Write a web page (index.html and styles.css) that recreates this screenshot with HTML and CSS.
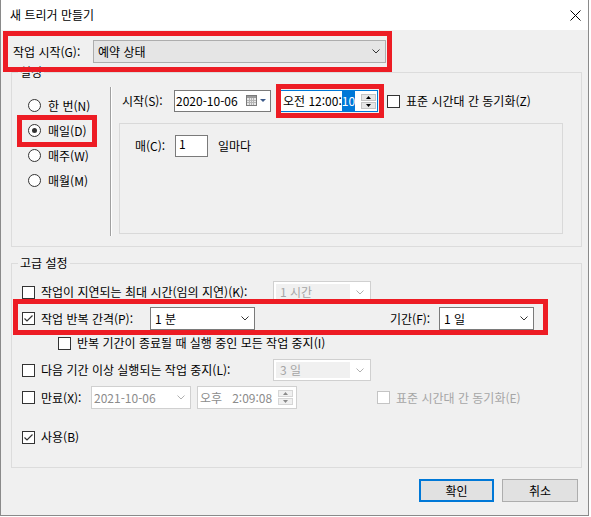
FILE: index.html
```html
<!DOCTYPE html>
<html lang="ko">
<head>
    <meta charset="UTF-8">
    <meta name="viewport" content="width=device-width, initial-scale=1.0">
    <title>새 트리거 만들기</title>
    <link rel="stylesheet" href="styles.css">
</head>
<body>
    <div class="window">
        <!-- Title bar -->
        <div class="titlebar">
            <span class="title">새 트리거 만들기</span>
            <svg class="close" width="11" height="11" viewBox="0 0 11 11"><path d="M0.5 0.5 L10.5 10.5 M10.5 0.5 L0.5 10.5" stroke="#000" stroke-width="1" fill="none"/></svg>
        </div>

        <div class="content">
            <!-- Begin the task -->
            <div class="start-row">
                <span class="start-label">작업 시작(G):</span>
                <div class="select select-start">
                    <span>예약 상태</span>
                    <svg class="chev" width="8" height="5" viewBox="0 0 8 5"><path d="M0.5 0.5 L4 4 L7.5 0.5" fill="none" stroke="#333"/></svg>
                </div>
            </div>

            <!-- Settings -->
            <fieldset class="group group-settings">
                <legend>설정</legend>
                <div class="settings">
                    <div class="radios">
                        <div class="radio-row"><span class="radio"></span>한 번(N)</div>
                        <div class="radio-row"><span class="radio on"></span>매일(D)</div>
                        <div class="radio-row"><span class="radio"></span>매주(W)</div>
                        <div class="radio-row"><span class="radio"></span>매월(M)</div>
                    </div>
                    <div class="sep"></div>
                    <div class="schedule">
                        <div class="when-row">
                            <span class="when-label">시작(S):</span>
                            <div class="date-box">
                                <span>2020-10-06</span>
                                <svg width="21" height="12" viewBox="0 0 21 12">
                                    <rect x="0.5" y="0.5" width="10" height="10" fill="#e8e8e8" stroke="#7a7a7a"/>
                                    <rect x="1" y="1" width="9" height="2" fill="#9a9a9a"/>
                                    <path d="M3.5 3 V10 M5.5 3 V10 M7.5 3 V10 M1 5.5 H10 M1 7.5 H10" stroke="#b4b4b4" stroke-width="1"/>
                                    <path d="M14 4 L20 4 L17 7 Z" fill="#3c5a8a"/>
                                </svg>
                            </div>
                            <div class="time-box focused">
                                <span>오전 12:00:<span class="sel">10</span></span>
                                <div class="spin">
                                    <span class="spin-btn"><svg width="5" height="3" viewBox="0 0 5 3"><path d="M2.5 0 L5 3 L0 3 Z" fill="#000"/></svg></span>
                                    <span class="spin-btn"><svg width="5" height="3" viewBox="0 0 5 3"><path d="M0 0 L5 0 L2.5 3 Z" fill="#000"/></svg></span>
                                </div>
                            </div>
                            <span class="check sync-check"></span>
                            <span class="gap-label">표준 시간대 간 동기화(Z)</span>
                        </div>
                        <div class="daily">
                            <div class="daily-row">
                                <span class="every-label">매(C):</span>
                                <span class="num-box">1</span>
                                <span class="every-unit">일마다</span>
                            </div>
                        </div>
                    </div>
                </div>
            </fieldset>

            <!-- Advanced settings -->
            <fieldset class="group group-adv">
                <legend>고급 설정</legend>
                <div class="opt-row row-delay">
                    <span class="check"></span>
                    <span class="opt-label wide">작업이 지연되는 최대 시간(임의 지연)(K):</span>
                    <div class="select select-off small">
                        <span class="off-text">1 시간</span>
                        <svg width="8" height="5" viewBox="0 0 8 5"><path d="M0.5 0.5 L4 4 L7.5 0.5" fill="none" stroke="#b0b0b0"/></svg>
                    </div>
                </div>
                <div class="opt-row row-repeat">
                    <span class="check"><svg width="11" height="11" viewBox="0 0 11 11"><path d="M1.5 5.5 L4 8 L9.5 2.5" fill="none" stroke="#333" stroke-width="1.2"/></svg></span>
                    <span class="opt-label repeat-label">작업 반복 간격(P):</span>
                    <div class="select select-on repeat-select">
                        <span>1 분</span>
                        <svg width="8" height="5" viewBox="0 0 8 5"><path d="M0.5 0.5 L4 4 L7.5 0.5" fill="none" stroke="#333"/></svg>
                    </div>
                    <span class="opt-label period-label">기간(F):</span>
                    <div class="select select-on period-select">
                        <span>1 일</span>
                        <svg width="8" height="5" viewBox="0 0 8 5"><path d="M0.5 0.5 L4 4 L7.5 0.5" fill="none" stroke="#333"/></svg>
                    </div>
                </div>
                <div class="opt-row row-stopall">
                    <span class="check"></span>
                    <span class="gap-label">반복 기간이 종료될 때 실행 중인 모든 작업 중지(I)</span>
                </div>
                <div class="opt-row row-stoplong">
                    <span class="check"></span>
                    <span class="opt-label wide">다음 기간 이상 실행되는 작업 중지(L):</span>
                    <div class="select select-off small">
                        <span class="off-text">3 일</span>
                        <svg width="8" height="5" viewBox="0 0 8 5"><path d="M0.5 0.5 L4 4 L7.5 0.5" fill="none" stroke="#b0b0b0"/></svg>
                    </div>
                </div>
                <div class="opt-row row-expire">
                    <span class="check"></span>
                    <span class="opt-label expire-label">만료(X):</span>
                    <div class="select select-off-plain expire-date">
                        <span>2021-10-06</span>
                        <svg width="8" height="5" viewBox="0 0 8 5"><path d="M0.5 0.5 L4 4 L7.5 0.5" fill="none" stroke="#b0b0b0"/></svg>
                    </div>
                    <div class="time-box off">
                        <span>오후&nbsp;&nbsp;&nbsp;2:09:08</span>
                        <div class="spin">
                            <span class="spin-btn"><svg width="5" height="3" viewBox="0 0 5 3"><path d="M2.5 0 L5 3 L0 3 Z" fill="#8a8a8a"/></svg></span>
                            <span class="spin-btn"><svg width="5" height="3" viewBox="0 0 5 3"><path d="M0 0 L5 0 L2.5 3 Z" fill="#8a8a8a"/></svg></span>
                        </div>
                    </div>
                    <span class="check disabled expire-sync"></span>
                    <span class="gap-label off-text">표준 시간대 간 동기화(E)</span>
                </div>
                <div class="opt-row row-enabled">
                    <span class="check"><svg width="11" height="11" viewBox="0 0 11 11"><path d="M1.5 5.5 L4 8 L9.5 2.5" fill="none" stroke="#333" stroke-width="1.2"/></svg></span>
                    <span class="gap-label">사용(B)</span>
                </div>
            </fieldset>

            <!-- Buttons -->
            <div class="buttons">
                <button class="btn btn-default">확인</button>
                <button class="btn">취소</button>
            </div>
        </div>

        <!-- Red annotation boxes -->
        <div class="mark mark-start"></div>
        <div class="mark mark-time"></div>
        <div class="mark mark-daily"></div>
        <div class="mark mark-repeat"></div>
    </div>
</body>
</html>
```

FILE: styles.css
```css
* {
    box-sizing: border-box;
}
body {
    margin: 0;
    background-color: #ffffff;
    font-family: "Noto Sans CJK KR", sans-serif;
    font-size: 12px;
    line-height: 16px;
    color: #000000;
}
.window {
    position: relative;
    width: 589px;
    height: 516px;
    border: 1px solid #8a8a8a;
    border-top: none;
    background-color: #f0f0f0;
}
.titlebar {
    height: 30px;
    background-color: #ffffff;
    display: flex;
    align-items: center;
    justify-content: space-between;
    padding: 0 7px 0 9px;
}
.content {
    padding: 10px 6px 0 10px;
}

/* Begin the task row */
.start-row {
    display: flex;
    align-items: center;
    height: 23px;
    padding-left: 2px;
}
.start-label {
    width: 80px;
}
.select {
    display: flex;
    align-items: center;
    justify-content: space-between;
    height: 22px;
    background-color: #ffffff;
    border: 1px solid #7a7a7a;
    padding: 0 5px 0 4px;
}
.select-start {
    width: 293px;
    height: 23px;
    background-color: #e5e5e5;
    border-color: #adadad;
}

/* Group boxes */
.group {
    margin: 0;
    padding: 0;
    min-width: 0;
    border: 1px solid #dcdcdc;
}
.group legend {
    margin-left: 6px;
    padding: 0 2px;
    line-height: 14px;
}
.group-settings {
    margin-top: 2px;
}
.group-adv {
    margin-top: 9px;
    padding-bottom: 22px;
}

/* Settings */
.settings {
    display: flex;
    height: 167px;
}
.radios {
    width: 98px;
    padding: 14px 0 0 16px;
}
.radio-row {
    display: flex;
    align-items: center;
    height: 25px;
}
.radio {
    display: flex;
    align-items: center;
    justify-content: center;
    width: 13px;
    height: 13px;
    margin-right: 7px;
    border: 1px solid #333333;
    border-radius: 50%;
    background-color: #ffffff;
}
.radio.on::after {
    content: "";
    width: 5px;
    height: 5px;
    border-radius: 50%;
    background-color: #333333;
}
.sep {
    margin-top: 8px;
    height: 149px;
    border-left: 1px solid #a0a0a0;
    border-right: 1px solid #ffffff;
}
.schedule {
    padding: 11px 0 0 7px;
}
.when-row {
    display: flex;
    align-items: center;
    height: 22px;
}
.when-label {
    width: 55px;
    padding-left: 3px;
}
.date-box {
    display: flex;
    align-items: center;
    justify-content: space-between;
    width: 97px;
    height: 22px;
    border: 1px solid #7a7a7a;
    background-color: #ffffff;
    padding: 0 3px 0 1px;
}
.time-box {
    display: flex;
    align-items: center;
    justify-content: space-between;
    width: 99px;
    height: 22px;
    margin-left: 8px;
    border: 1px solid #7a7a7a;
    background-color: #ffffff;
    padding: 0 1px 0 3px;
}
.time-box.focused {
    border-color: #0078d7;
}
.sel {
    background-color: #0078d7;
    color: #ffffff;
    padding: 2px 0;
}
.spin {
    display: flex;
    flex-direction: column;
    gap: 1px;
}
.spin-btn {
    display: flex;
    align-items: center;
    justify-content: center;
    width: 15px;
    height: 7px;
    background-color: #e6e6e6;
    border: 1px solid #c4c4c4;
}
.check {
    display: flex;
    align-items: center;
    justify-content: center;
    flex: none;
    width: 13px;
    height: 13px;
    border: 1px solid #333333;
    background-color: #ffffff;
}
.check.disabled {
    border-color: #c4c4c4;
}
.sync-check {
    margin-left: 9px;
}
.gap-label {
    margin-left: 6px;
    white-space: nowrap;
}
.daily {
    margin-top: 11px;
    width: 444px;
    height: 111px;
    border: 1px solid #d9d9d9;
    padding: 11px 0 0 15px;
}
.daily-row {
    display: flex;
    align-items: center;
    height: 22px;
}
.every-label {
    width: 40px;
}
.num-box {
    width: 33px;
    height: 22px;
    border: 1px solid #7a7a7a;
    background-color: #ffffff;
    padding-left: 3px;
    line-height: 16px;
}
.every-unit {
    margin-left: 10px;
}

/* Advanced settings */
.opt-row {
    display: flex;
    align-items: center;
    height: 22px;
    padding-left: 10px;
    white-space: nowrap;
}
.opt-label {
    margin-left: 6px;
}
.opt-label.wide {
    width: 232px;
}
.row-delay {
    margin-top: 11px;
}
.row-repeat {
    margin-top: 4px;
    height: 23px;
}
.repeat-label {
    width: 109px;
}
.repeat-select {
    width: 105px;
    height: 23px;
}
.period-label {
    width: 49px;
    margin-left: 135px;
}
.period-select {
    width: 95px;
    height: 23px;
}
.row-stopall {
    margin-top: 5px;
    height: 16px;
    padding-left: 46px;
}
.row-stoplong {
    margin-top: 8px;
}
.row-expire {
    margin-top: 5px;
    height: 23px;
}
.expire-label {
    width: 50px;
}
.row-enabled {
    margin-top: 20px;
    height: 16px;
}
.select-off {
    width: 98px;
    border-color: #d0d0d0;
    padding: 2px 6px 2px 2px;
}
.select-off .off-text {
    flex: 1;
    height: 100%;
    background-color: #f0f0f0;
    padding-left: 4px;
    line-height: 16px;
}
.select-off svg {
    margin-left: 6px;
}
.off-text {
    color: #a6a6a6;
}
.select-off-plain {
    width: 100px;
    height: 23px;
    border-color: #d0d0d0;
    color: #8c8c8c;
    padding: 0 5px 0 2px;
}
.time-box.off {
    width: 100px;
    height: 23px;
    margin-left: 6px;
    border-color: #d0d0d0;
    color: #8c8c8c;
    padding: 0 3px 0 2px;
}
.time-box.off .spin-btn {
    background-color: #f0f0f0;
    border-color: #d6d6d6;
}
.expire-sync {
    margin-left: 80px;
}

/* Buttons */
.buttons {
    display: flex;
    justify-content: flex-end;
    gap: 8px;
    margin-top: 11px;
    padding-right: 4px;
}
.btn {
    width: 75px;
    height: 23px;
    font-family: inherit;
    font-size: 12px;
    color: #000000;
    background-color: #e1e1e1;
    border: 1px solid #adadad;
    padding: 0;
}
.btn + .btn {
    width: 76px;
}
.btn-default {
    border: 2px solid #0078d7;
}

/* Red annotation boxes */
.mark {
    position: absolute;
    border: 5px solid #ed1c24;
}
.mark-start {
    left: 2px;
    top: 31px;
    width: 389px;
    height: 41px;
}
.mark-time {
    left: 275px;
    top: 84px;
    width: 108px;
    height: 34px;
}
.mark-daily {
    left: 16px;
    top: 115px;
    width: 80px;
    height: 32px;
}
.mark-repeat {
    left: 12px;
    top: 299px;
    width: 535px;
    height: 36px;
}
```
